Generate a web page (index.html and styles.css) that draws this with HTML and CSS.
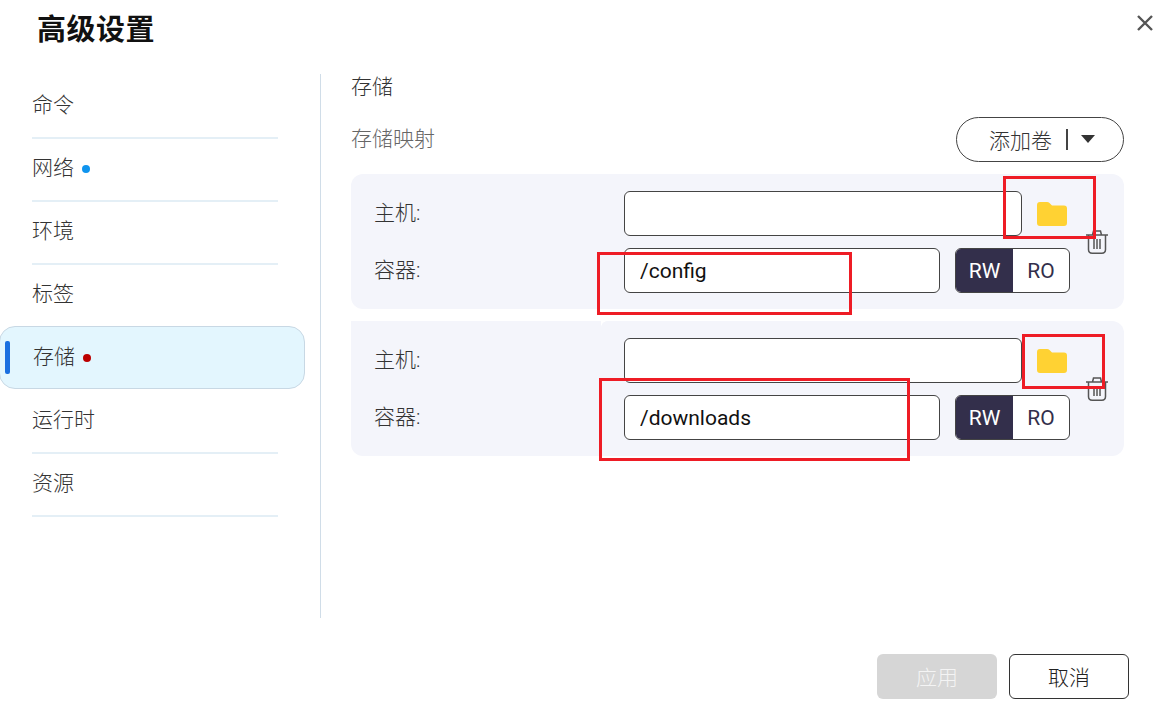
FILE: index.html
```html
<!DOCTYPE html>
<html lang="zh">
<head>
<meta charset="utf-8">
<title>高级设置</title>
<link rel="stylesheet" href="styles.css">
</head>
<body>
<div class="dialog">
  <header class="header">
    <h1 class="title">高级设置</h1>
    <button class="close" aria-label="关闭">
      <svg width="18" height="18" viewBox="0 0 18 18"><path d="M2 2 L16 16 M16 2 L2 16" stroke="#555" stroke-width="2.4" fill="none"/></svg>
    </button>
  </header>
  <div class="content">
    <nav class="sidebar">
      <div class="item"><span class="item-text">命令</span></div>
      <div class="item"><span class="item-text">网络</span><span class="dot dot-blue"></span></div>
      <div class="item"><span class="item-text">环境</span></div>
      <div class="item"><span class="item-text">标签</span></div>
      <div class="item active"><span class="item-text">存储</span><span class="dot dot-red"></span></div>
      <div class="item"><span class="item-text">运行时</span></div>
      <div class="item"><span class="item-text">资源</span></div>
    </nav>
    <main class="main">
      <div class="heading">存储</div>
      <div class="toolbar">
        <span class="subheading">存储映射</span>
        <button class="add">
          <span class="add-text">添加卷</span>
          <span class="add-sep"></span>
          <span class="add-caret"></span>
        </button>
      </div>
      <section class="card">
        <div class="fields">
          <div class="row">
            <label class="label">主机:</label>
            <input class="input input-long" value="">
            <svg class="folder" width="32" height="26" viewBox="0 0 32 26"><path d="M1 4 Q1 1 4 1 H11 Q12.5 1 13.5 2 L16 4.5 H28 Q31 4.5 31 7.5 V22 Q31 25 28 25 H4 Q1 25 1 22 Z" fill="#ffd233"/></svg>
          </div>
          <div class="row">
            <label class="label">容器:</label>
            <input class="input input-short" value="/config">
            <div class="toggle"><span class="toggle-on">RW</span><span class="toggle-off">RO</span></div>
          </div>
        </div>
        <svg class="trash" width="22" height="24" viewBox="0 0 22 24" fill="none" stroke="#555" stroke-width="1.5"><path d="M0 5 H22 M6.500 5 L7.500 1 H14.500 L15.500 5 M2.500 5 V19.500 Q2.500 23.200 6.200 23.200 H15.800 Q19.500 23.200 19.500 19.500 V5 M8 9 V19 M11 9 V19 M14 9 V19"/></svg>
      </section>
      <section class="card card-second">
        <span class="notch"></span>
        <div class="fields">
          <div class="row">
            <label class="label">主机:</label>
            <input class="input input-long" value="">
            <svg class="folder" width="32" height="26" viewBox="0 0 32 26"><path d="M1 4 Q1 1 4 1 H11 Q12.5 1 13.5 2 L16 4.5 H28 Q31 4.5 31 7.5 V22 Q31 25 28 25 H4 Q1 25 1 22 Z" fill="#ffd233"/></svg>
          </div>
          <div class="row">
            <label class="label">容器:</label>
            <input class="input input-short" value="/downloads">
            <div class="toggle"><span class="toggle-on">RW</span><span class="toggle-off">RO</span></div>
          </div>
        </div>
        <svg class="trash" width="22" height="24" viewBox="0 0 22 24" fill="none" stroke="#555" stroke-width="1.5"><path d="M0 5 H22 M6.500 5 L7.500 1 H14.500 L15.500 5 M2.500 5 V19.500 Q2.500 23.200 6.200 23.200 H15.800 Q19.500 23.200 19.500 19.500 V5 M8 9 V19 M11 9 V19 M14 9 V19"/></svg>
      </section>
    </main>
  </div>
  <footer class="footer">
    <button class="btn btn-disabled">应用</button>
    <button class="btn btn-cancel">取消</button>
  </footer>
  <div class="mark mark-a"></div>
  <div class="mark mark-b"></div>
  <div class="mark mark-c"></div>
  <div class="mark mark-d"></div>
</div>
</body>
</html>
```
FILE: styles.css
```css
* { box-sizing: border-box; }
html, body { margin: 0; height: 100%; background: #fff; overflow: hidden; }
body, button, input {
  font-family: Roboto, "Noto Sans CJK SC", sans-serif;
  font-size: 21px;
  font-weight: 300;
  color: #333;
}
.dialog { position: relative; width: 1162px; height: 719px; display: flex; flex-direction: column; }

.header { height: 74px; display: flex; justify-content: space-between; align-items: flex-start; padding: 0 8px 0 37px; }
.title { margin: 10px 0 0; font-size: 29px; line-height: 40px; font-weight: 700; color: #111; letter-spacing: 0.5px; }
.close { margin-top: 14px; padding: 0; width: 18px; height: 18px; border: 0; background: none; display: flex; }

.content { height: 544px; display: flex; }
.sidebar { width: 321px; border-right: 1px solid #d0dde8; padding-right: 15px; }
.item { position: relative; height: 63px; padding-left: 32px; display: flex; align-items: center; line-height: 28px; }
.item-text { margin-top: -2px; }
.item::after { content: ""; position: absolute; left: 32px; bottom: -2px; width: 246px; height: 2px; background: #e4eff6; }
.item.active { z-index: 1; margin-left: -1px; padding-left: 33px; background: #e3f6fe; border: 1px solid #c8d8e4; border-radius: 16px; }
.item.active::after { display: none; }
.item.active::before { content: ""; position: absolute; left: 5px; top: 14px; width: 5px; height: 33px; border-radius: 2px; background: #1a6fe0; }
.dot { width: 8px; height: 8px; border-radius: 50%; margin-left: 8px; }
.dot-blue { background: #0f94ee; }
.dot-red { background: #bb0000; }

.main { width: 773px; margin-left: 30px; }
.heading { height: 28px; line-height: 26px; margin-bottom: 15px; }
.toolbar { height: 45px; display: flex; justify-content: space-between; align-items: center; margin-bottom: 12px; }
.subheading { color: #666; margin-top: -5px; }
.add { width: 168px; height: 45px; border: 1px solid #444; border-radius: 23px; background: #fff; display: flex; align-items: center; padding: 0 0 0 32px; }
.add-text { margin-top: -2px; }
.add-sep { width: 2px; height: 21px; background: #444; margin-left: 14px; }
.add-caret { margin-left: 13px; margin-top: -2px; width: 0; height: 0; border-left: 7px solid transparent; border-right: 7px solid transparent; border-top: 8px solid #333; }

.card { position: relative; display: flex; align-items: center; padding: 17px 16px 16px 23px; background: #f4f5fb; border-radius: 12px; margin-bottom: 12px; }
.card-second { border-top-left-radius: 0; }
.notch { position: absolute; left: 250px; top: 0; width: 6px; height: 6px; background: radial-gradient(circle at 100% 100%, #f4f5fb 5.5px, #fff 6px); }
.fields { flex: 1; display: flex; flex-direction: column; gap: 12px; }
.row { height: 45px; display: flex; align-items: center; }
.label { width: 250px; flex: none; margin-top: -5px; }
.input { height: 45px; border: 1px solid #444; border-radius: 6px; background: #fff; padding: 0 15px; color: #111; outline: none; font-weight: 400; }
.input-long { width: 398px; }
.input-short { width: 316px; }
.folder { margin-left: 14px; }
.toggle { width: 115px; height: 45px; margin-left: 15px; display: flex; border: 1px solid #444; border-radius: 6px; overflow: hidden; background: #fff; font-weight: 400; }
.toggle-on, .toggle-off { display: flex; align-items: center; justify-content: center; }
.toggle-on { width: 57px; background: #332f4b; color: #fff; }
.toggle-off { flex: 1; color: #332f4b; }
.trash { flex: none; }

.footer { display: flex; justify-content: flex-end; gap: 12px; padding: 36px 33px 0 0; }
.btn { width: 120px; height: 45px; border-radius: 6px; padding: 0 0 2px; }
.btn-disabled { border: 0; background: #d6d6d6; color: #f4f4f4; }
.btn-cancel { border: 1px solid #333; background: #fff; color: #222; }

.mark { position: absolute; border: 3px solid #ee1c25; pointer-events: none; z-index: 2; }
.mark-a { left: 1003px; top: 176px; width: 93px; height: 63px; }
.mark-b { left: 597px; top: 252px; width: 255px; height: 63px; }
.mark-c { left: 1022px; top: 334px; width: 83px; height: 55px; }
.mark-d { left: 599px; top: 378px; width: 311px; height: 83px; }
```
